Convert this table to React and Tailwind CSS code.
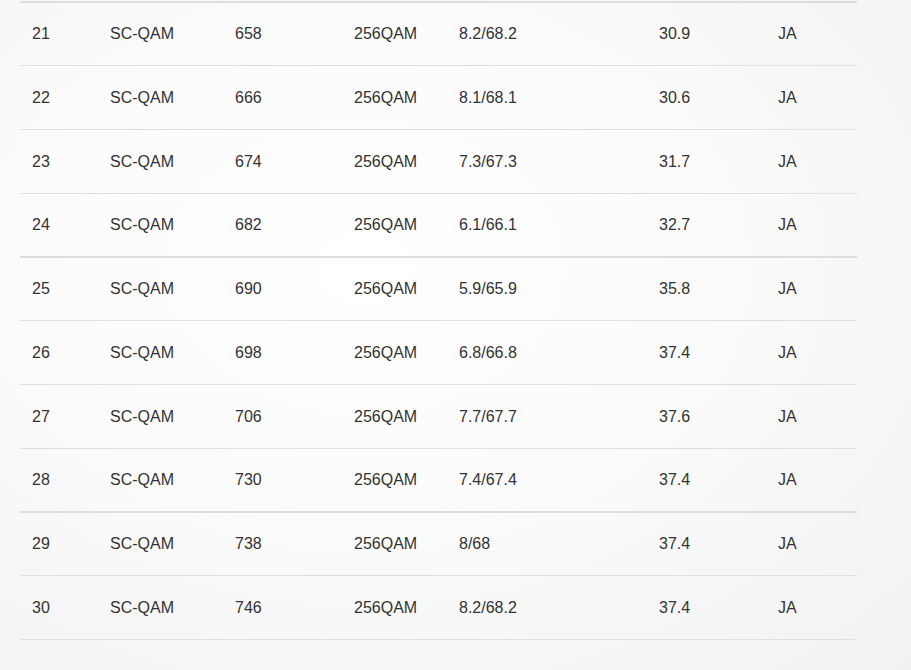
import React from "react";

const groups = [
  [
    ["21", "SC-QAM", "658", "256QAM", "8.2/68.2", "30.9", "JA"],
    ["22", "SC-QAM", "666", "256QAM", "8.1/68.1", "30.6", "JA"],
    ["23", "SC-QAM", "674", "256QAM", "7.3/67.3", "31.7", "JA"],
    ["24", "SC-QAM", "682", "256QAM", "6.1/66.1", "32.7", "JA"],
  ],
  [
    ["25", "SC-QAM", "690", "256QAM", "5.9/65.9", "35.8", "JA"],
    ["26", "SC-QAM", "698", "256QAM", "6.8/66.8", "37.4", "JA"],
    ["27", "SC-QAM", "706", "256QAM", "7.7/67.7", "37.6", "JA"],
    ["28", "SC-QAM", "730", "256QAM", "7.4/67.4", "37.4", "JA"],
  ],
  [
    ["29", "SC-QAM", "738", "256QAM", "8/68", "37.4", "JA"],
    ["30", "SC-QAM", "746", "256QAM", "8.2/68.2", "37.4", "JA"],
  ],
];

const widths = ["w-[78px]", "w-[125px]", "w-[119px]", "w-[105px]", "w-[200px]", "w-[119px]", "w-[91px]"];

export default function App() {
  return (
    <div
      className="w-full h-[670px] overflow-hidden bg-[radial-gradient(ellipse_at_40%_40%,#ffffff_0%,#fbfbfb_45%,#f1f1f1_100%)] pt-[1px] pl-[20px]"
      style={{ fontFamily: '"Liberation Sans", Arial, sans-serif' }}
    >
      <div className="w-[837px] text-[16px] text-[#333333]">
        {groups.map((g, gi) => (
          <div key={gi}>
            {g.map((row, ri) => {
              const first = ri === 0;
              const lastBeforeThick = gi < 2 && ri === g.length - 1;
              return (
                <div
                  key={ri}
                  className={
                    "flex items-center " +
                    (first ? "border-t-2 border-[#dddddd] " : "border-t border-[#e0e0e0] ") +
                    (lastBeforeThick ? "h-[63px]" : "h-[64px]")
                  }
                >
                  {row.map((c, ci) => (
                    <div key={ci} className={widths[ci] + " pl-[12px] leading-[20px]"}>
                      {c}
                    </div>
                  ))}
                </div>
              );
            })}
          </div>
        ))}
        <div className="border-t border-[#e0e0e0]" />
      </div>
    </div>
  );
}
